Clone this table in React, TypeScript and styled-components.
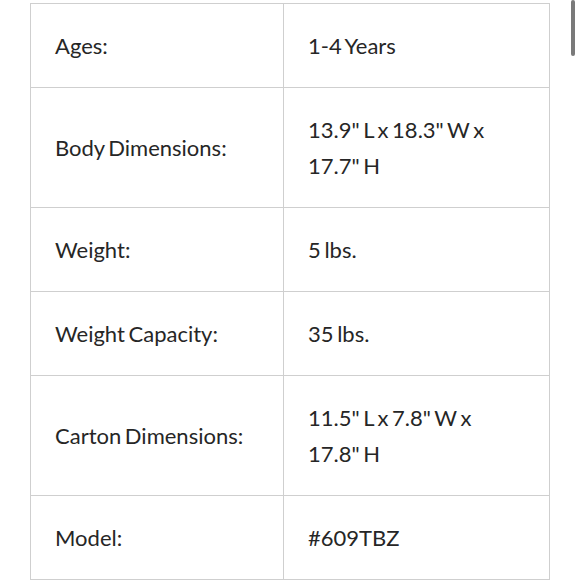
import React, { FC } from 'react';
import styled, { createGlobalStyle } from 'styled-components';

const GlobalStyle = createGlobalStyle`
  html, body {
    margin: 0;
    padding: 0;
    background: #ffffff;
  }
  body {
    font-family: Lato, "Open Sans", sans-serif;
    color: #222222;
  }
`;

const Page = styled.div`
  position: relative;
  width: 580px;
  height: 580px;
  overflow: hidden;
  padding: 3px 0 0 30px;
  box-sizing: border-box;
`;

const SpecTable = styled.table`
  width: 520px;
  border-collapse: collapse;
  table-layout: fixed;
`;

const Cell = styled.td<{ $wide?: boolean }>`
  box-sizing: border-box;
  width: ${({ $wide }) => ($wide ? '253px' : 'auto')};
  border: 1px solid #cfcfcf;
  padding: 24px 24px 23px;
  font-size: 22px;
  line-height: 36px;
  word-spacing: -2px;
  vertical-align: middle;
  text-align: left;
  color: #262626;
`;

const ScrollThumb = styled.div`
  position: absolute;
  top: 0;
  left: 571px;
  width: 4px;
  height: 56px;
  border-radius: 2px;
  background: #7a7a7a;
`;

interface Spec {
  label: string;
  value: string[];
}

const specs: Spec[] = [
  { label: 'Ages:', value: ['1-4 Years'] },
  { label: 'Body Dimensions:', value: ['13.9" L x 18.3" W x', '17.7" H'] },
  { label: 'Weight:', value: ['5 lbs.'] },
  { label: 'Weight Capacity:', value: ['35 lbs.'] },
  { label: 'Carton Dimensions:', value: ['11.5" L x 7.8" W x', '17.8" H'] },
  { label: 'Model:', value: ['#609TBZ'] },
];

const App: FC = () => {
  return (
    <Page>
      <GlobalStyle />
      <SpecTable>
        <tbody>
          {specs.map(spec => (
            <tr key={spec.label}>
              <Cell $wide>{spec.label}</Cell>
              <Cell>
                {spec.value.map((line, i) => (
                  <div key={i}>{line}</div>
                ))}
              </Cell>
            </tr>
          ))}
        </tbody>
      </SpecTable>
      <ScrollThumb />
    </Page>
  );
};

export default App;
